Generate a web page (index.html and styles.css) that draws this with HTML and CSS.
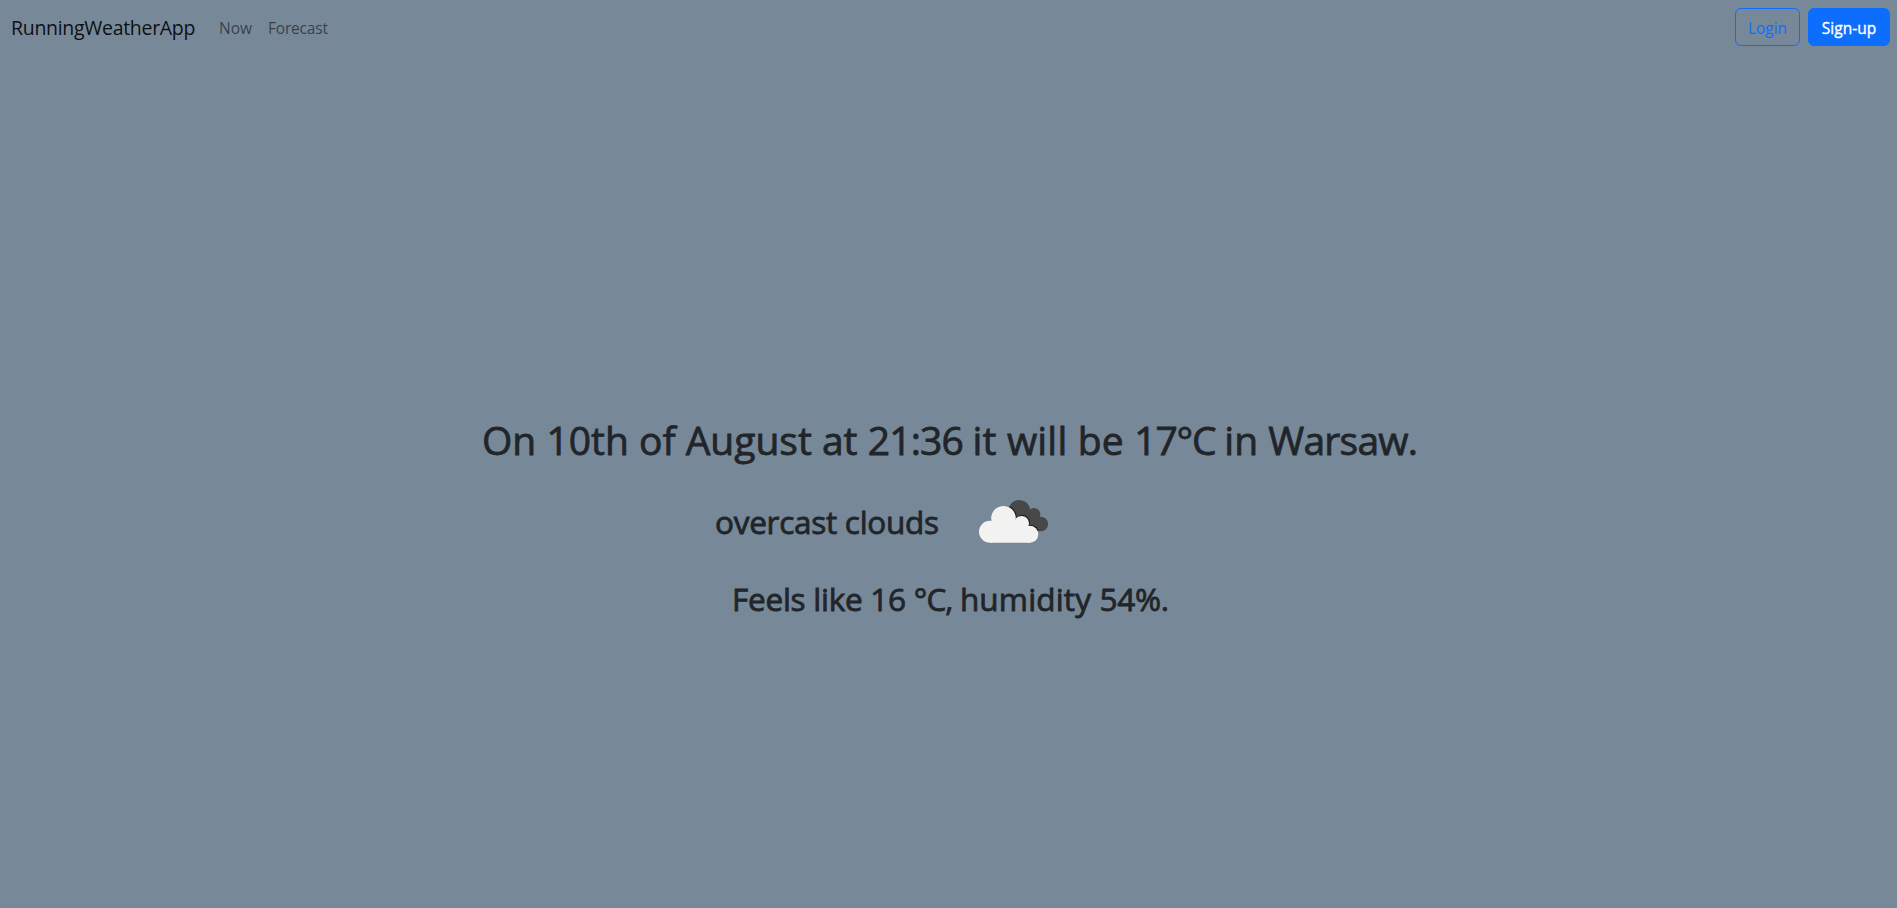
FILE: index.html
```html
<!DOCTYPE html>
<html lang="en">
<head>
<meta charset="utf-8">
<title>RunningWeatherApp</title>
<link rel="stylesheet" href="styles.css">
</head>
<body>
<nav class="navbar">
  <a class="brand">RunningWeatherApp</a>
  <a class="nav-link now">Now</a>
  <a class="nav-link forecast">Forecast</a>
  <div class="actions">
    <button class="btn btn-outline">Login</button>
    <button class="btn btn-primary">Sign-up</button>
  </div>
</nav>
<main class="weather">
  <h1 class="headline">On 10th of August at <span class="time">21:36 </span><span class="verb">it will be </span><span class="temp">17°C </span>in <span class="city">Warsaw.</span></h1>
  <div class="conditions">
    <h2 class="description">overcast clouds</h2>
    <svg class="icon" viewBox="0 0 110 80" width="110" height="80">
      <defs>
        <clipPath id="back-cloud">
          <circle cx="59.3" cy="30.7" r="10.8"/>
          <circle cx="74" cy="34.3" r="6.3"/>
          <circle cx="80.8" cy="44" r="7.3"/>
          <path d="M59 30h15l7 21H66z"/>
        </clipPath>
      </defs>
      <g clip-path="url(#back-cloud)">
        <path fill="#48484a" d="M0 0h110v80H0z"/>
        <g fill="#19191b">
          <circle cx="44.3" cy="37.4" r="12.3"/>
          <circle cx="62.4" cy="42.4" r="7.4"/>
          <circle cx="70.4" cy="53.4" r="8.6"/>
        </g>
      </g>
      <g fill="#f2f2f0">
        <circle cx="30" cy="51.7" r="11"/>
        <circle cx="43.5" cy="38.3" r="12.3"/>
        <circle cx="61.6" cy="43.3" r="7.4"/>
        <circle cx="69.8" cy="54.2" r="8.5"/>
        <path d="M30 44h34l6 8v10.7H30z"/>
      </g>
    </svg>
  </div>
  <h2 class="feels">Feels like 16 <span class="unit">°C, </span><span class="humidity">humidity </span>54%.</h2>
</main>
</body>
</html>
```
FILE: styles.css
```css
* { box-sizing: border-box; }
body {
  margin: 0;
  height: 908px;
  overflow: hidden;
  background: #778899;
  color: #212529;
  font-family: "Segoe UI", "Open Sans", "Noto Sans", sans-serif;
  font-size: 16px;
  line-height: 24px;
}
.navbar { display: flex; align-items: center; height: 54px; padding: 0 7px 0 11px; }
.brand { width: 208px; padding-top: 2px; font-size: 19.5px; line-height: 30px; letter-spacing: -.3px; color: rgba(0,0,0,.9); }
.nav-link { padding-top: 1px; font-size: 15.5px; letter-spacing: -.2px; color: rgba(0,0,0,.55); }
.now { width: 49px; letter-spacing: 0; }
.actions { display: flex; gap: 8px; margin-left: auto; }
.btn { height: 38px; padding: 1px 0 0; border: 1px solid #0d6efd; border-radius: 6px; font: inherit; font-size: 15.5px; }
.btn-outline { width: 65px; background: transparent; color: #0d6efd; }
.btn-primary { width: 82px; background: #0d6efd; color: #fff; -webkit-text-stroke: .35px; }
.weather { padding-top: 362px; }
h1, h2 { margin: 0; font-weight: 500; white-space: nowrap; -webkit-text-stroke: .8px; }
.headline { padding-left: 482px; font-size: 39px; line-height: 48px; letter-spacing: 0; }
.time { letter-spacing: -.8px; }
.verb { letter-spacing: .2px; }
.temp { letter-spacing: -1.2px; }
.city { letter-spacing: -.75px; }
.conditions { display: flex; align-items: center; height: 80px; margin-top: 16px; padding-left: 715px; }
.description { width: 245px; padding-top: 4px; font-size: 31.5px; line-height: 38px; letter-spacing: -.27px; }
.icon { display: block; }
.feels { margin-top: 20px; padding-left: 732px; font-size: 31.5px; line-height: 38px; letter-spacing: -.25px; }
.unit { letter-spacing: -.9px; }
.humidity { letter-spacing: .15px; }
```
